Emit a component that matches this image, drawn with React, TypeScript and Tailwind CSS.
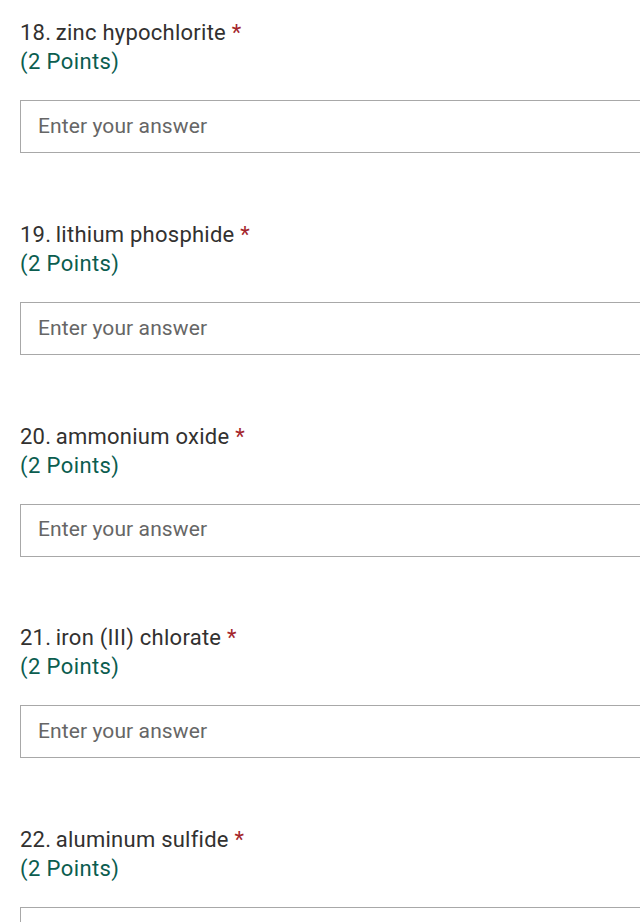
const questions = [
  { n: 18, label: 'zinc hypochlorite' },
  { n: 19, label: 'lithium phosphide' },
  { n: 20, label: 'ammonium oxide' },
  { n: 21, label: 'iron (III) chlorate' },
  { n: 22, label: 'aluminum sulfide' },
];

export default function App() {
  return (
    <div className="h-[922px] w-[640px] overflow-hidden bg-white pl-5 pt-[18px] font-['Roboto',sans-serif]">
      {questions.map((q) => (
        <div key={q.n} className="mb-[66.75px]">
          <div className="text-[22px] leading-[29px] tracking-[0.25px] text-[#323130]">
            {q.n}.<span className="tracking-[-1px]"> </span>{q.label} <span className="text-[#a4262c]">*</span>
          </div>
          <div className="text-[22px] leading-[29px] tracking-[0.4px] text-[#0b5d4f]">(2 Points)</div>
          <div className="mt-[24px] flex h-[53px] w-[700px] items-center border border-[#a8a8a8] pl-[17px] text-[21px] tracking-[0.1px] text-[#666666]">
            Enter your answer
          </div>
        </div>
      ))}
    </div>
  );
}
